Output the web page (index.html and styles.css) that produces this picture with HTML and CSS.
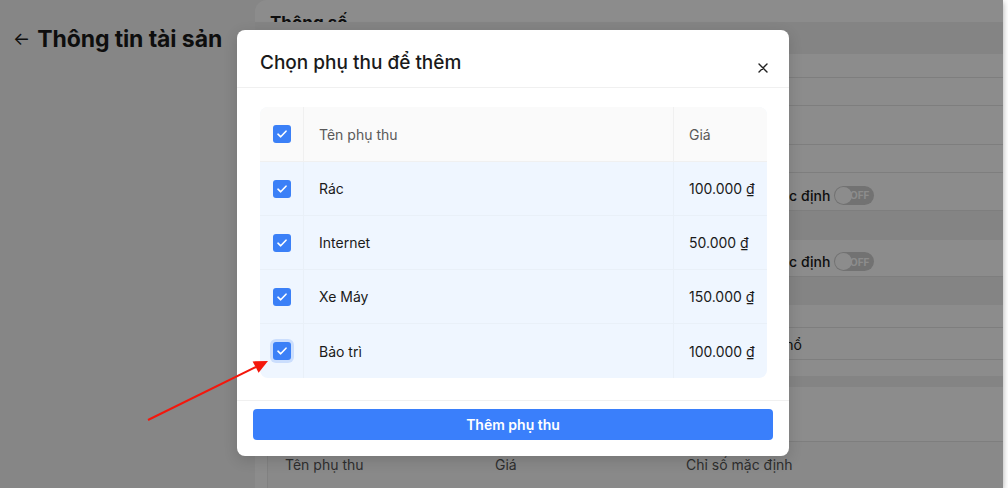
FILE: index.html
```html
<!DOCTYPE html>
<html lang="vi">
<head>
    <meta charset="UTF-8">
    <meta name="viewport" content="width=device-width, initial-scale=1.0">
    <title>Thông tin tài sản</title>
    <link rel="stylesheet" href="styles.css">
</head>
<body>
    <div class="screen">
        <div class="app">
            <aside class="side">
                <div class="page-title">
                    <span class="back">&#8592;</span>
                    <h1>Thông tin tài sản</h1>
                </div>
            </aside>

            <main class="card">
                <div class="seg seg-title"><h2>Thông số</h2></div>
                <div class="seg shade"></div>
                <div class="seg line"></div>
                <div class="seg line"></div>
                <div class="seg line"></div>
                <div class="seg line"></div>
                <div class="seg line field">
                    <span>Chỉ số mặc định</span>
                    <span class="toggle"><i></i>OFF</span>
                </div>
                <div class="seg shade"></div>
                <div class="seg line field">
                    <span>Chỉ số mặc định</span>
                    <span class="toggle"><i></i>OFF</span>
                </div>
                <div class="seg shade"></div>
                <div class="seg line"></div>
                <div class="seg line field meter"><span>Đồng hổ</span></div>
                <div class="seg"></div>
                <div class="seg shade"></div>
                <div class="seg line"></div>
                <div class="table-head">
                    <span>Tên phụ thu</span>
                    <span>Giá</span>
                    <span>Chỉ số mặc định</span>
                </div>
            </main>
        </div>

        <div class="overlay"></div>

        <div class="modal">
            <div class="modal-header">
                <h3>Chọn phụ thu để thêm</h3>
                <button class="close" aria-label="Đóng">
                    <svg width="10" height="10" viewBox="0 0 10 10"><path d="M1 1L9 9M9 1L1 9" stroke="#222" stroke-width="1.4" stroke-linecap="round"/></svg>
                </button>
            </div>

            <div class="modal-body">
                <div class="fee-table">
                    <div class="fee-row head">
                        <div class="c-check"><span class="box"><svg width="10" height="8" viewBox="0 0 10 8"><path d="M1 4.2L3.7 6.8L9 1.2" fill="none" stroke="#fff" stroke-width="1.6" stroke-linecap="round" stroke-linejoin="round"/></svg></span></div>
                        <div class="c-name">Tên phụ thu</div>
                        <div class="c-price">Giá</div>
                    </div>
                    <div class="fee-row">
                        <div class="c-check"><span class="box"><svg width="10" height="8" viewBox="0 0 10 8"><path d="M1 4.2L3.7 6.8L9 1.2" fill="none" stroke="#fff" stroke-width="1.6" stroke-linecap="round" stroke-linejoin="round"/></svg></span></div>
                        <div class="c-name">Rác</div>
                        <div class="c-price">100.000 ₫</div>
                    </div>
                    <div class="fee-row">
                        <div class="c-check"><span class="box"><svg width="10" height="8" viewBox="0 0 10 8"><path d="M1 4.2L3.7 6.8L9 1.2" fill="none" stroke="#fff" stroke-width="1.6" stroke-linecap="round" stroke-linejoin="round"/></svg></span></div>
                        <div class="c-name">Internet</div>
                        <div class="c-price">50.000 ₫</div>
                    </div>
                    <div class="fee-row">
                        <div class="c-check"><span class="box"><svg width="10" height="8" viewBox="0 0 10 8"><path d="M1 4.2L3.7 6.8L9 1.2" fill="none" stroke="#fff" stroke-width="1.6" stroke-linecap="round" stroke-linejoin="round"/></svg></span></div>
                        <div class="c-name">Xe Máy</div>
                        <div class="c-price">150.000 ₫</div>
                    </div>
                    <div class="fee-row">
                        <div class="c-check"><span class="box focus"><svg width="10" height="8" viewBox="0 0 10 8"><path d="M1 4.2L3.7 6.8L9 1.2" fill="none" stroke="#fff" stroke-width="1.6" stroke-linecap="round" stroke-linejoin="round"/></svg></span></div>
                        <div class="c-name">Bảo trì</div>
                        <div class="c-price">100.000 ₫</div>
                    </div>
                </div>
            </div>

            <div class="modal-footer">
                <button class="add-btn">Thêm phụ thu</button>
            </div>
        </div>

        <svg class="annot" width="1003" height="488" viewBox="0 0 1003 488">
            <line x1="148" y1="420" x2="256" y2="367" stroke="#f4170c" stroke-width="2"/>
            <polygon points="268,361 258.6,372.8 252.6,361.4" fill="#f4170c"/>
        </svg>
    </div>
</body>
</html>
```

FILE: styles.css
```css
body {
    margin: 0;
    background: #fff;
    font-family: Inter, "Noto Sans", sans-serif;
    color: #1a1a1a;
}

.screen {
    position: relative;
    width: 1003px;
    height: 488px;
    overflow: hidden;
    box-shadow: 0 2px 6px rgba(0, 0, 0, 0.35);
}

.app {
    display: flex;
    height: 100%;
    background: #f5f5f5;
}

.side {
    width: 255px;
    flex: none;
}

.page-title {
    display: flex;
    align-items: center;
    gap: 7px;
    padding: 25px 0 0 13px;
}

.back {
    font-size: 18px;
    line-height: 28px;
}

.page-title h1 {
    margin: 0;
    font-size: 23px;
    line-height: 28px;
    font-weight: 700;
    letter-spacing: -0.1px;
}

/* background page, mostly hidden behind the modal */
.card {
    flex: 1;
    background: #fff;
    border-radius: 12px 0 0 0;
    display: grid;
    grid-template-rows: 22px 32px 24px 28px 39px 28px 38px 29px 37px 28px 23px 32px 16px 11px 55px 1fr;
}

.seg {
    min-height: 0;
}

.seg.line {
    border-bottom: 1px solid #e6e6e6;
}

.seg.shade {
    background: #f1f1f1;
}

.seg-title h2 {
    margin: 0;
    padding: 13px 0 0 15px;
    font-size: 17px;
    line-height: 20px;
    font-weight: 700;
}

.field {
    display: flex;
    align-items: center;
    gap: 4px;
    padding: 7px 0 0 468px;
    font-size: 14px;
    font-weight: 500;
}

.field.meter {
    padding: 2px 0 0 491px;
    font-weight: 400;
}

.toggle {
    position: relative;
    display: inline-flex;
    align-items: center;
    justify-content: flex-end;
    width: 40px;
    height: 19px;
    padding-right: 5px;
    box-sizing: border-box;
    border-radius: 10px;
    background: #cfcfcf;
    color: #fff;
    font-size: 10px;
    font-weight: 700;
}

.toggle i {
    position: absolute;
    left: 1px;
    top: 1px;
    width: 17px;
    height: 17px;
    border-radius: 50%;
    background: #fff;
}

.table-head {
    display: grid;
    grid-template-columns: 210px 191px 1fr;
    margin-left: 12px;
    background: #fafafa;
    border-left: 1px solid #ececec;
    padding-top: 14px;
    font-size: 14px;
    color: #555;
}

.table-head span {
    padding-left: 17px;
}

.overlay {
    position: absolute;
    inset: 0;
    background: rgba(0, 0, 0, 0.45);
}

/* modal */
.modal {
    position: absolute;
    left: 237px;
    top: 30px;
    width: 552px;
    background: #fff;
    border-radius: 8px;
    box-shadow: 0 4px 14px rgba(0, 0, 0, 0.15);
}

.modal-header {
    height: 57px;
    display: flex;
    align-items: center;
    justify-content: space-between;
    padding: 0 20px 0 23px;
    border-bottom: 1px solid #f0f0f0;
}

.modal-header h3 {
    margin: 0;
    font-size: 19px;
    font-weight: 500;
    padding-top: 7px;
}

.close {
    border: none;
    background: none;
    padding: 0;
    width: 12px;
    height: 12px;
    margin-top: 18px;
    display: flex;
    align-items: center;
    justify-content: center;
    cursor: pointer;
}

.modal-body {
    padding: 19px 22px 22px 23px;
}

.fee-table {
    border-radius: 8px;
    overflow: hidden;
    background: #eff6ff;
}

.fee-row {
    display: grid;
    grid-template-columns: 44px 370px 1fr;
    height: 54px;
    box-sizing: border-box;
    border-bottom: 1px solid #e9f0f8;
    font-size: 14px;
}

.fee-row:last-child {
    border-bottom: none;
}

.fee-row.head {
    height: 55px;
    background: #fafafa;
    border-bottom: 1px solid #f0f0f0;
    color: #595959;
}

.fee-row > div {
    display: flex;
    align-items: center;
}

.c-check {
    justify-content: center;
    border-right: 1px solid #e9f0f8;
}

.c-name {
    padding-left: 15px;
    border-right: 1px solid #e9f0f8;
}

.head .c-check,
.head .c-name {
    border-right-color: #f0f0f0;
}

.c-price {
    padding-left: 15px;
}

.box {
    width: 18px;
    height: 18px;
    border-radius: 3px;
    background: #3b80f7;
    display: flex;
    align-items: center;
    justify-content: center;
}

.box.focus {
    box-shadow: 0 0 0 3px rgba(59, 128, 247, 0.2);
}

.modal-footer {
    border-top: 1px solid #f0f0f0;
    padding: 8px 16px 16px;
}

.add-btn {
    display: block;
    width: 100%;
    height: 31px;
    border: none;
    border-radius: 4px;
    background: #3a7ffb;
    color: #fff;
    font-family: inherit;
    font-size: 14px;
    font-weight: 600;
    cursor: pointer;
}

.annot {
    position: absolute;
    left: 0;
    top: 0;
    pointer-events: none;
}
```
